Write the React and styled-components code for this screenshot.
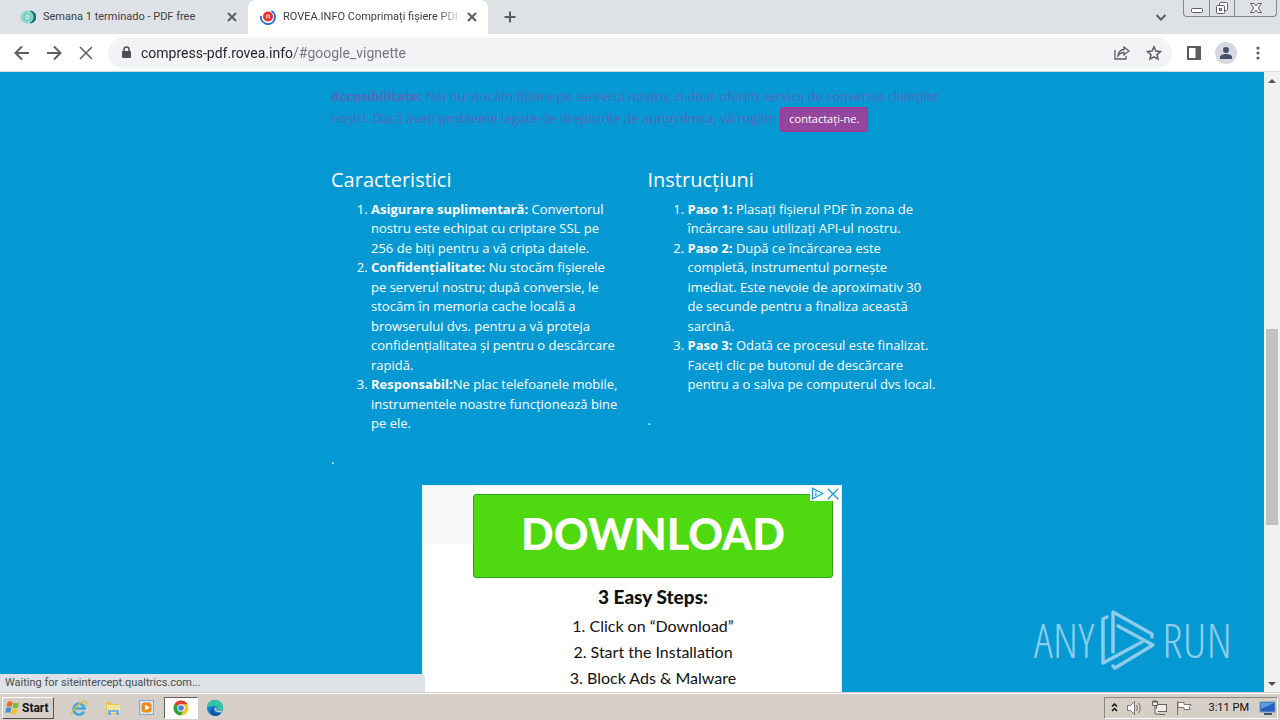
import React from "react";
import styled, { createGlobalStyle, css } from "styled-components";

const Global = createGlobalStyle`
  *, *::before, *::after { box-sizing: border-box; }
  body { margin: 0; background: #dee1e6; font-family: "Open Sans", sans-serif; }
  button { font: inherit; color: inherit; background: none; border: 0; padding: 0; cursor: pointer; }
  svg { display: block; flex: none; }
`;

const uiFont = css`font-family: Roboto, "Noto Sans", sans-serif;`;

const Desktop = styled.div`
  display: flex;
  flex-direction: column;
  height: 100vh;
  overflow: hidden;
`;

/* ---------- browser frame ---------- */
const TabStrip = styled.header`
  display: flex;
  align-items: stretch;
  height: 34px;
  padding-left: 8px;
  background: #dee1e6;
`;
const Tab = styled.div`
  display: flex;
  align-items: center;
  gap: 7px;
  width: 240px;
  padding: 0 8px 0 12px;
  border-radius: 8px 8px 0 0;
  background: ${(p) => (p.$active ? "#fff" : "transparent")};
  color: #3c4043;
  font-size: 11px;
  ${uiFont}
`;
const TabTitle = styled.span`
  flex: 1;
  min-width: 0;
  overflow: hidden;
  white-space: nowrap;
  line-height: 16px;
  ${(p) => p.$fade && "mask-image: linear-gradient(90deg, #000 88%, #0004);"}
`;
const IconButton = styled.button`
  display: grid;
  place-items: center;
  flex: none;
  width: ${(p) => p.$size || 28}px;
  height: ${(p) => p.$size || 28}px;
  border-radius: 50%;
  color: #5a5d61;
`;
const StripActions = styled.div`
  display: flex;
  align-items: center;
  flex: 1;
  justify-content: space-between;
  padding: 0 8px;
`;
const WindowButtons = styled.div`
  display: flex;
  align-self: flex-start;
  height: 17px;
  margin-right: 3px;
  border: 1px solid #84878c;
  border-top: 0;
  border-radius: 0 0 4px 4px;
`;
const WindowButton = styled.button`
  display: grid;
  place-items: center;
  width: ${(p) => (p.$wide ? 42 : 25)}px;
  color: #5b5e63;
  & + & { border-left: 1px solid #84878c; }
`;
const Toolbar = styled.nav`
  display: flex;
  align-items: center;
  gap: 4px;
  height: 38px;
  padding: 0 8px;
  background: #fff;
  border-bottom: 1px solid #cfdce4;
`;
const AddressBar = styled.label`
  display: flex;
  align-items: center;
  gap: 4px;
  flex: 1;
  height: 30px;
  margin: 0 4px;
  padding: 0 4px 0 12px;
  border-radius: 15px;
  background: #f1f3f4;
`;
const AddressInput = styled.input`
  flex: 1;
  min-width: 0;
  height: 24px;
  padding: 0 0 0 5px;
  border: 0;
  outline: 0;
  background: linear-gradient(90deg, #202124 156px, #70757a 156px);
  background-clip: text;
  color: transparent;
  font-size: 14px;
  ${uiFont}
`;
const Avatar = styled.span`
  display: grid;
  place-items: center;
  width: 22px;
  height: 22px;
  border-radius: 50%;
  background: #d5d9df;
`;

/* ---------- page ---------- */
const Viewport = styled.div`
  position: relative;
  display: flex;
  flex: 1;
  min-height: 0;
`;
const Page = styled.main`
  flex: 1;
  overflow: hidden;
  padding-top: 15px;
  background: #0599d3;
  color: #fff;
  font-size: 13px;
  line-height: 1.5;
`;
const Container = styled.div`
  width: 602px;
  max-width: 100%;
  margin: 0 auto;
`;
const Notice = styled.p`
  margin: 0 0 36px;
  color: #5a67b9;
  white-space: pre;
`;
const ContactButton = styled.button`
  height: 25px;
  padding: 0 8px;
  border: 1px solid #a8318f;
  border-radius: 3px;
  background: #95459b;
  color: #fff;
  font-size: 11px;
  vertical-align: middle;
`;
const Columns = styled.div`
  display: grid;
  grid-template-columns: 1fr 1fr;
  gap: 30px;
`;
const Heading = styled.h2`
  margin: 0 0 8px;
  font-size: 20px;
  font-weight: 400;
  line-height: 24px;
`;
const List = styled.ol`
  margin: 0 0 16px;
  padding-left: 40px;
  white-space: pre;
`;
const Dot = styled.p`margin: 0 0 16px;`;

const Ad = styled.aside`
  position: relative;
  width: 420px;
  height: 280px;
  margin: 0 auto;
  padding: 8px 8px 0 50px;
  border: 1px solid #e6f3f9;
  background: linear-gradient(#f8f8f8, #f8f8f8) 0 0 / 50px 58px no-repeat #fff;
  color: #111;
  font-family: Lato, sans-serif;
  text-align: center;
`;
const DownloadButton = styled.button`
  display: block;
  width: 100%;
  height: 84px;
  padding-bottom: 4px;
  border: 1px solid #2fa51b;
  border-radius: 3px;
  background: #4fd910;
  color: #fff;
  font-size: 43px;
  font-weight: 900;
`;
const AdTitle = styled.h3`
  margin: 6px 0 3px;
  font-size: 19px;
  font-weight: 900;
  line-height: 26px;
`;
const AdSteps = styled.ol`
  margin: 0;
  padding: 0;
  list-style-position: inside;
  font-size: 16px;
  line-height: 26px;
`;
const AdChoices = styled.div`
  position: absolute;
  top: 0;
  right: 0;
  display: flex;
  align-items: center;
  gap: 2px;
  height: 15px;
  padding: 0 1px;
  background: #fff;
  color: #169bd0;
`;
const Scrollbar = styled.div`
  display: flex;
  flex-direction: column;
  width: 16px;
  background: #f1f1f1;
  color: #505050;
`;
const ScrollArrow = styled.button`
  display: grid;
  place-items: center;
  height: 17px;
`;
const Track = styled.div`
  display: grid;
  flex: 1;
  grid-template-rows: 240fr 196fr 150fr;
`;
const Thumb = styled.div`
  grid-row: 2;
  margin: 0 2px;
  background: #c1c1c1;
`;
const StatusBubble = styled.div`
  position: absolute;
  left: 0;
  bottom: 0;
  width: 425px;
  height: 18px;
  padding-left: 5px;
  border-radius: 0 3px 0 0;
  background: #dee1e6;
  color: #4a4d51;
  font-size: 11px;
  line-height: 18px;
  ${uiFont}
`;
const Watermark = styled.div`
  position: absolute;
  right: 48px;
  bottom: 20px;
  display: flex;
  align-items: center;
  gap: 6px;
  color: #8ccbea;
  font-family: "Open Sans Condensed Light", "Noto Sans ExtraCondensed Light", "Open Sans Condensed", "Roboto Condensed", "Liberation Sans Narrow", sans-serif;
  font-size: 48px;
  font-weight: 300;
  line-height: 64px;
`;

/* ---------- taskbar ---------- */
const Taskbar = styled.footer`
  display: flex;
  align-items: center;
  height: 28px;
  padding: 2px 2px 0;
  border-top: 1px solid #d6cfc7;
  background: #d6cfc7;
  box-shadow: inset 0 1px #fff;
  ${uiFont}
`;
const StartButton = styled.button`
  display: flex;
  align-items: center;
  gap: 2px;
  width: 52px;
  height: 22px;
  margin-right: 8px;
  padding-left: 2px;
  border: 1px solid;
  border-color: #fff #55514d #55514d #fff;
  color: #111;
  font-size: 12px;
  font-weight: 700;
`;
const TaskButton = styled.button`
  display: grid;
  place-items: center;
  width: 34px;
  height: 22px;
  border: 1px solid;
  border-color: ${(p) => (p.$active ? "#625e5a #fff #fff #625e5a" : "transparent")};
  background: ${(p) => (p.$active ? "#fff" : "none")};
`;
const Tray = styled.div`
  display: flex;
  align-items: center;
  gap: 8px;
  height: 22px;
  margin-left: auto;
  padding: 0 1px 0 6px;
  border: 1px solid;
  border-color: #8b8680 #fff #fff #8b8680;
`;
const Clock = styled.time`
  margin: 0 2px 0 8px;
  color: #111;
  font-size: 11px;
`;

const Icon = ({ s = 16, w = 2, vb = 16, children }) => (
  <svg width={s} height={s} viewBox={`0 0 ${vb} ${vb}`} fill="none" stroke="currentColor" strokeWidth={w} aria-hidden="true">{children}</svg>
);
const Cross = ({ s = 16, w = 2, i = 4 }) => <Icon s={s} w={w}><path d={`M${i} ${i}L${16 - i} ${16 - i}M${16 - i} ${i}L${i} ${16 - i}`} /></Icon>;

const features = [
  ["Asigurare suplimentară:", " Convertorul\nnostru este echipat cu criptare SSL pe\n256 de biți pentru a vă cripta datele."],
  ["Confidențialitate:", " Nu stocăm fișierele\npe serverul nostru; după conversie, le\nstocăm în memoria cache locală a\nbrowserului dvs. pentru a vă proteja\nconfidențialitatea și pentru o descărcare\nrapidă."],
  ["Responsabil:", "Ne plac telefoanele mobile,\ninstrumentele noastre funcționează bine\npe ele."],
];
const steps = [
  ["Paso 1:", " Plasați fișierul PDF în zona de\nîncărcare sau utilizați API-ul nostru."],
  ["Paso 2:", " După ce încărcarea este\ncompletă, instrumentul pornește\nimediat. Este nevoie de aproximativ 30\nde secunde pentru a finaliza această\nsarcină."],
  ["Paso 3:", " Odată ce procesul este finalizat.\nFaceți clic pe butonul de descărcare\npentru a o salva pe computerul dvs local."],
];

const Section = ({ title, items }) => (
  <section>
    <Heading>{title}</Heading>
    <List>{items.map(([label, text]) => <li key={label}><strong>{label}</strong>{text}</li>)}</List>
    <Dot>.</Dot>
  </section>
);

export default function App() {
  return (
    <>
      <Global />
      <Desktop>
        <TabStrip>
          <Tab>
            <svg width="16" height="16" viewBox="0 0 16 16" aria-hidden="true">
              <path d="M10 2a6 6 0 0 1 0 12c3-4 3-8 0-12z" fill="#176b6b" stroke="#176b6b" />
              <circle cx="7" cy="8" r="6.500" fill="#8fd8cc" /><circle cx="7.500" cy="8" r="3.500" fill="#a9e3d8" stroke="#5fc0b2" />
            </svg>
            <TabTitle>Semana 1 terminado - PDF free</TabTitle>
            <IconButton $size={16} aria-label="Close tab"><Cross /></IconButton>
          </Tab>
          <Tab $active>
            <svg width="16" height="16" viewBox="0 0 16 16" fill="none" aria-hidden="true">
              <circle cx="8" cy="7.500" r="5" fill="#e8332c" />
              <path d="M6.500 9.500V6h3v3.500M8 6v3.500" stroke="#f9c0bc" />
              <path d="M1 7a7 7 0 1 0 10.500-5" stroke="#2e6fd6" strokeWidth="2" />
            </svg>
            <TabTitle $fade>ROVEA.INFO Comprimați fișiere PDF</TabTitle>
            <IconButton $size={16} aria-label="Close tab"><Cross /></IconButton>
          </Tab>
          <StripActions>
            <IconButton aria-label="New tab"><Icon><path d="M8 2.500v11M2.500 8h11" /></Icon></IconButton>
            <IconButton aria-label="Search tabs"><Icon><path d="M3.500 6L8 10.500L12.500 6" /></Icon></IconButton>
          </StripActions>
          <WindowButtons>
            <WindowButton aria-label="Minimize"><svg width="14" height="14" fill="#fff" stroke="currentColor" aria-hidden="true"><rect x="1.500" y="7.500" width="11" height="4" rx="1" /></svg></WindowButton>
            <WindowButton aria-label="Restore"><svg width="14" height="14" fill="#fff" stroke="currentColor" aria-hidden="true"><rect x="4.500" y="1.500" width="8" height="8" rx="1" /><rect x="1.500" y="4.500" width="8" height="8" rx="1" /><rect x="4.500" y="7.500" width="2" height="2" /></svg></WindowButton>
            <WindowButton $wide aria-label="Close"><svg width="14" height="14" fill="#fff" stroke="currentColor" aria-hidden="true"><path d="M1.500 2.500h3.500l2 2.500 2-2.500h3.500L9.200 7l3.300 4.500H9L7 9l-2 2.500H1.500L4.800 7z" /></svg></WindowButton>
          </WindowButtons>
        </TabStrip>

        <Toolbar>
          <IconButton aria-label="Back"><Icon><path d="M15 8H2M8 1.500L1.500 8L8 14.500" /></Icon></IconButton>
          <IconButton aria-label="Forward"><Icon><path d="M1 8h13M8 1.500L14.500 8L8 14.500" /></Icon></IconButton>
          <IconButton aria-label="Stop"><Cross i={2} w={1.5} /></IconButton>
          <AddressBar>
            <svg width="12" height="14" viewBox="0 0 12 14" aria-hidden="true"><rect x="2" y="5" width="9" height="7" rx="1" fill="#4d5156" /><path d="M4 6V3.500a2.500 2.500 0 0 1 5 0V6" fill="none" stroke="#4d5156" strokeWidth="1.500" /></svg>
            <AddressInput aria-label="Address" defaultValue="compress-pdf.rovea.info/#google_vignette" />
            <IconButton aria-label="Share"><Icon w={1.3}><path d="M1 5v9h11v-3M4 11c0-4 3-6.500 6-6.500V2l5 4-5 4V7.500C7.500 7.500 5.500 8.500 4 11z" /></Icon></IconButton>
            <IconButton aria-label="Bookmark"><Icon w={1.5}><path d="M8 1.800l1.900 4.200 4.600.5-3.400 3.100.9 4.500-4-2.300-4 2.300.9-4.500L1.500 6.500 6.100 6z" /></Icon></IconButton>
          </AddressBar>
          <IconButton aria-label="Side panel"><Icon><rect x="2" y="2" width="12" height="12" /><path d="M11.500 2v12" strokeWidth="4" /></Icon></IconButton>
          <IconButton aria-label="Profile"><Avatar><svg width="12" height="12" fill="#44506c" aria-hidden="true"><circle cx="6" cy="3" r="3" /><path d="M0 12V10c0-4 12-4 12 0v2z" /></svg></Avatar></IconButton>
          <IconButton aria-label="Menu"><svg width="4" height="14" fill="currentColor" aria-hidden="true"><circle cx="2" cy="2" r="1.600" /><circle cx="2" cy="7" r="1.600" /><circle cx="2" cy="12" r="1.600" /></svg></IconButton>
        </Toolbar>

        <Viewport>
          <Page>
            <Container>
              <Notice>
                <strong>Accesibilitate:</strong>
                {" Noi nu stocăm fișiere pe serverul nostru, ci doar oferim servicii de conversie clienților\nnoștri. Dacă aveți probleme legate de drepturile de autor/dmca, vă rugăm "}
                <ContactButton>contactați-ne.</ContactButton>
              </Notice>
              <Columns>
                <Section title="Caracteristici" items={features} />
                <Section title="Instrucțiuni" items={steps} />
              </Columns>
            </Container>
            <Ad>
              <DownloadButton>DOWNLOAD</DownloadButton>
              <AdTitle>3 Easy Steps:</AdTitle>
              <AdSteps>
                <li>Click on “Download”</li>
                <li>Start the Installation</li>
                <li>Block Ads &amp; Malware</li>
              </AdSteps>
              <AdChoices>
                <Icon s={13} w={1.5}><path d="M2 1.500v13L14.500 8zM6 7.500v3.500M6 5v1.500" /></Icon>
                <Cross s={14} w={1.5} i={2} />
              </AdChoices>
            </Ad>
          </Page>
          <Scrollbar>
            <ScrollArrow aria-label="Scroll up"><svg width="8" height="4" fill="currentColor" aria-hidden="true"><path d="M0 4L4 0L8 4z" /></svg></ScrollArrow>
            <Track><Thumb /></Track>
            <ScrollArrow aria-label="Scroll down"><svg width="8" height="4" fill="currentColor" aria-hidden="true"><path d="M0 0L4 4L8 0z" /></svg></ScrollArrow>
          </Scrollbar>
          <StatusBubble>Waiting for siteintercept.qualtrics.com...</StatusBubble>
          <Watermark>
            <span>ANY</span>
            <svg width="56" height="64" viewBox="0 0 56 64" fill="none" stroke="#8ccbea" strokeWidth="3.500" strokeLinecap="round" strokeLinejoin="round" aria-hidden="true">
              <path d="M7 9L3 11V55L42 34" />
              <path d="M13 44V4L52 26V29" />
              <path d="M18 18L53 37L15 60L13 58" />
            </svg>
            <span>RUN</span>
          </Watermark>
        </Viewport>

        <Taskbar>
          <StartButton>
            <svg width="15" height="15" viewBox="0 0 15 15" aria-hidden="true">
              <path d="M2.500 2Q5 .5 7.500 2L6.500 7Q4 5.500 1.500 7z" fill="#ee6a2c" /><path d="M8.500 2.500Q11 4 14 2.500L13 7.500Q10 9 7.500 7.500z" fill="#79b93c" />
              <path d="M1.300 8Q4 6.500 6.300 8L5.300 13Q3 11.500.3 13z" fill="#3f8fdb" /><path d="M7.300 8.500Q10 10 12.800 8.500L11.800 13.500Q9 15 6.300 13.500z" fill="#f5c22d" />
            </svg>
            Start
          </StartButton>
          <TaskButton aria-label="Internet Explorer">
            <svg width="18" height="18" viewBox="0 0 18 18" fill="none" aria-hidden="true"><path d="M14 12.500A5.500 5.500 0 1 1 14.500 9.500H5" stroke="#3ea6e0" strokeWidth="2.600" /><path d="M2 16C0 12 12 1 16.500 2.500c1 .8 0 3-1 4" stroke="#e8b93a" strokeWidth="1.300" /></svg>
          </TaskButton>
          <TaskButton aria-label="Explorer">
            <svg width="18" height="18" viewBox="0 0 18 18" aria-hidden="true"><path d="M2 3h5l1 2h7v10H2z" fill="#e9c558" /><path d="M3 6h13v8H3z" fill="#f7e49b" /><path d="M4 16v-5h11v5h-3v-3H7v3z" fill="#71b5de" /></svg>
          </TaskButton>
          <TaskButton aria-label="Media Player">
            <svg width="18" height="18" viewBox="0 0 18 18" aria-hidden="true"><rect x="1.500" y="1.500" width="14" height="14" fill="#d5e7f4" stroke="#7faccc" /><rect x="3.500" y="3.500" width="10" height="10" rx="3" fill="#f08a1d" /><path d="M7 5.500v6L12 8.500z" fill="#fff" /></svg>
          </TaskButton>
          <TaskButton $active aria-label="Chrome">
            <svg width="16" height="16" viewBox="0 0 16 16" aria-hidden="true"><circle cx="8" cy="8" r="7.500" fill="#f8c81c" /><path d="M8 8L1.500 4.300A7.500 7.500 0 0 1 14.500 4.300H8z" fill="#df3b2f" /><path d="M1.500 4.300A7.500 7.500 0 0 0 7.500 15.500L11 10 8 8z" fill="#2ba24c" /><circle cx="8" cy="8" r="3.700" fill="#fff" /><circle cx="8" cy="8" r="2.800" fill="#3f7de8" /></svg>
          </TaskButton>
          <TaskButton aria-label="Edge">
            <svg width="18" height="18" viewBox="0 0 18 18" aria-hidden="true"><circle cx="9" cy="9" r="8" fill="#1878c8" /><path d="M1 9a8 8 0 0 1 16-.5c0 3-3 4-6 3 1-1 1-4-2-4.500C5 6.500 2 8 1 9z" fill="#36c4a8" /><path d="M7 9c-1 4 3 6 8 5-1 2-4 3-6 3C4 16.500 4 10 7 9z" fill="#0e539f" /><path d="M9 8.500c2 0 2 2 1.500 3 2 1 5 .5 6-.5l-1 2c-4 1-8-1-6.500-4.500z" fill="#d6cfc7" /></svg>
          </TaskButton>
          <Tray>
            <svg width="7" height="11" fill="none" stroke="#111" strokeWidth="1.500" aria-hidden="true"><path d="M1 4.500L3.500 2L6 4.500M1 9L3.500 6.500L6 9" /></svg>
            <svg width="17" height="16" fill="#fff" stroke="#77736e" aria-hidden="true"><path d="M1.500 5.500h3l4-4v13l-4-4h-3z" /><path d="M10.500 5q2 3 0 6M12.500 3q3.500 5 0 10" fill="none" /></svg>
            <svg width="17" height="16" fill="#eee" stroke="#66625e" aria-hidden="true"><rect x="5.500" y="4.500" width="10" height="7" /><path d="M8 14.500h6M1.500 1.500h5v4h-5zM4 6v8h4M3 0v3M5 0v3" /></svg>
            <svg width="17" height="16" fill="#fff" stroke="#77736e" aria-hidden="true"><path d="M1.500 1v14M2 2.500h6v2h7l-2 3 1 2H8v-2H2z" /></svg>
            <Clock>3:11 PM</Clock>
            <svg width="17" height="16" aria-hidden="true"><rect x="1" y="2" width="15" height="10" fill="#2361bd" stroke="#7896bd" /><path d="M2 3h13L2 9z" fill="#5a9ee5" /><path d="M5 14h8" stroke="#44546c" strokeWidth="2" /></svg>
          </Tray>
        </Taskbar>
      </Desktop>
    </>
  );
}
